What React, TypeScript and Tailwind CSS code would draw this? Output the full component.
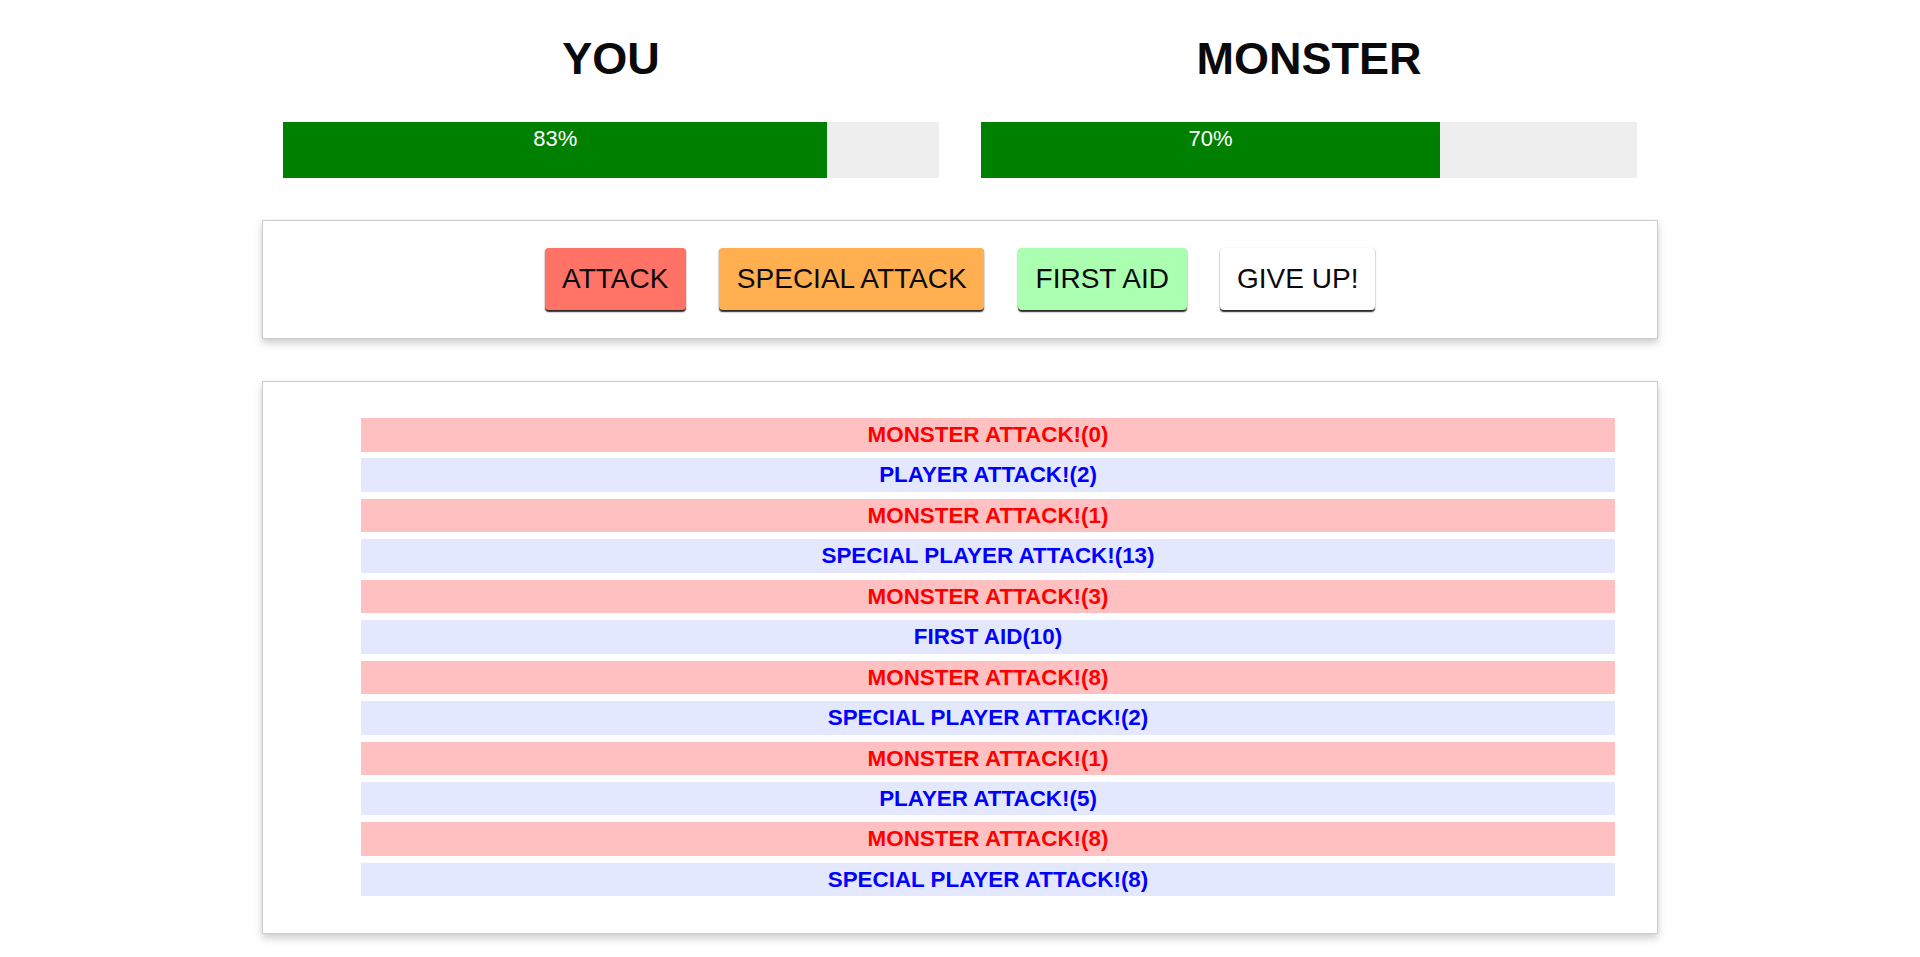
import React from "react";

type Turn = { isPlayer: boolean; text: string };

const turns: Turn[] = [
  { isPlayer: false, text: "Monster attack!(0)" },
  { isPlayer: true, text: "Player attack!(2)" },
  { isPlayer: false, text: "Monster attack!(1)" },
  { isPlayer: true, text: "Special player attack!(13)" },
  { isPlayer: false, text: "Monster attack!(3)" },
  { isPlayer: true, text: "First aid(10)" },
  { isPlayer: false, text: "Monster attack!(8)" },
  { isPlayer: true, text: "Special player attack!(2)" },
  { isPlayer: false, text: "Monster attack!(1)" },
  { isPlayer: true, text: "Player attack!(5)" },
  { isPlayer: false, text: "Monster attack!(8)" },
  { isPlayer: true, text: "Special player attack!(8)" },
];

const HealthBar = ({ title, health }: { title: string; health: number }) => (
  <div className="px-[21px]">
    <h1 className="mt-[37px] text-center text-[45px] font-bold leading-[44px] text-[#0a0a0a]">
      {title}
    </h1>
    <div className="mt-[41px] h-[56px] w-full bg-[#eeeeee]">
      <div
        className="h-full bg-[#008000] text-center text-[22px] leading-[33px] text-white"
        style={{ width: `${health}%` }}
      >
        {health}%
      </div>
    </div>
  </div>
);

const App = () => {
  return (
    <div className="min-h-screen bg-white font-['Liberation_Sans',Arial,sans-serif] text-[#0a0a0a]">
      <div className="mx-auto w-[1396px]">
        <section className="grid grid-cols-2">
          <HealthBar title="YOU" health={83} />
          <HealthBar title="MONSTER" health={70} />
        </section>

        <section className="mt-[42px] flex justify-center gap-[33.5px] border border-[#cccccc] pt-[27px] pb-[28px] shadow-[0_4px_8px_#cccccc]">
          <button className="h-[62px] w-[141px] rounded-[4px] bg-[#ff7367] text-[28px] shadow-[0_1.4px_1.4px_rgba(0,0,0,0.85)]">
            ATTACK
          </button>
          <button className="h-[62px] w-[265px] rounded-[4px] bg-[#ffaf4f] text-[28px] shadow-[0_1.4px_1.4px_rgba(0,0,0,0.85)]">
            SPECIAL ATTACK
          </button>
          <button className="h-[62px] w-[169px] rounded-[4px] bg-[#aaffb0] text-[28px] shadow-[0_1.4px_1.4px_rgba(0,0,0,0.85)]">
            FIRST AID
          </button>
          <button className="h-[62px] w-[155px] rounded-[4px] bg-white text-[28px] shadow-[0_1.4px_1.4px_rgba(0,0,0,0.85)]">
            GIVE UP!
          </button>
        </section>

        <section className="mt-[42px] border border-[#cccccc] pt-[36px] pb-[37px] pl-[98px] pr-[42px] shadow-[0_4px_8px_#cccccc]">
          <ul className="flex flex-col gap-[6.95px] text-center text-[22.4px] font-bold uppercase leading-[33.5px]">
            {turns.map((turn, i) => (
              <li
                key={i}
                className={
                  turn.isPlayer
                    ? "bg-[#e4e8ff] text-[#0000ff]"
                    : "bg-[#ffc0c1] text-[#ff0000]"
                }
              >
                {turn.text}
              </li>
            ))}
          </ul>
        </section>
      </div>
    </div>
  );
};

export default App;
